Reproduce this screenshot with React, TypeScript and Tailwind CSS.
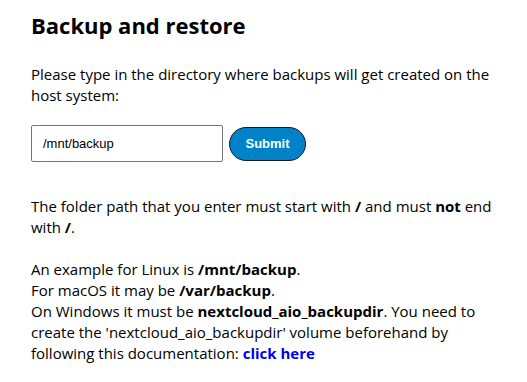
export default function App() {
  return (
    <div className="min-h-[382px] w-[527px] bg-white px-[31px] pt-[9px] font-['Open_Sans','Noto_Sans',sans-serif] text-[15px] leading-[21px] text-black">
      <h2 className="text-[22px] font-bold leading-[32px]">Backup and restore</h2>
      <p className="mt-[23px]">
        Please type in the directory where backups will get created on the host system:
      </p>
      <form className="mt-[19px] flex items-center gap-[6px]" onSubmit={(e) => e.preventDefault()}>
        <input
          type="text"
          defaultValue="/mnt/backup"
          className="h-[37px] w-[192px] rounded-[2px] border border-[#767676] px-[11px] font-['Liberation_Sans',Arial,sans-serif] text-[13px] text-black outline-none"
        />
        <button
          type="submit"
          className="h-[34px] w-[77px] rounded-full border border-[#1a1a1a] bg-[#0082c9] font-['Liberation_Sans',Arial,sans-serif] text-[13px] font-bold text-white"
        >
          Submit
        </button>
      </form>
      <p className="mt-[34px]">
        The folder path that you enter must start with <b>/</b> and must <b>not</b> end with <b>/</b>.
      </p>
      <p className="mt-[21px]">
        An example for Linux is <b>/mnt/backup</b>.<br />
        For macOS it may be <b>/var/backup</b>.<br />
        On Windows it must be <b>nextcloud_aio_backupdir</b>. You need to create the 'nextcloud_aio_backupdir'
        volume beforehand by following this documentation:{" "}
        <a href="#" className="font-bold text-[#0000ee]">
          click here
        </a>
      </p>
    </div>
  );
}
